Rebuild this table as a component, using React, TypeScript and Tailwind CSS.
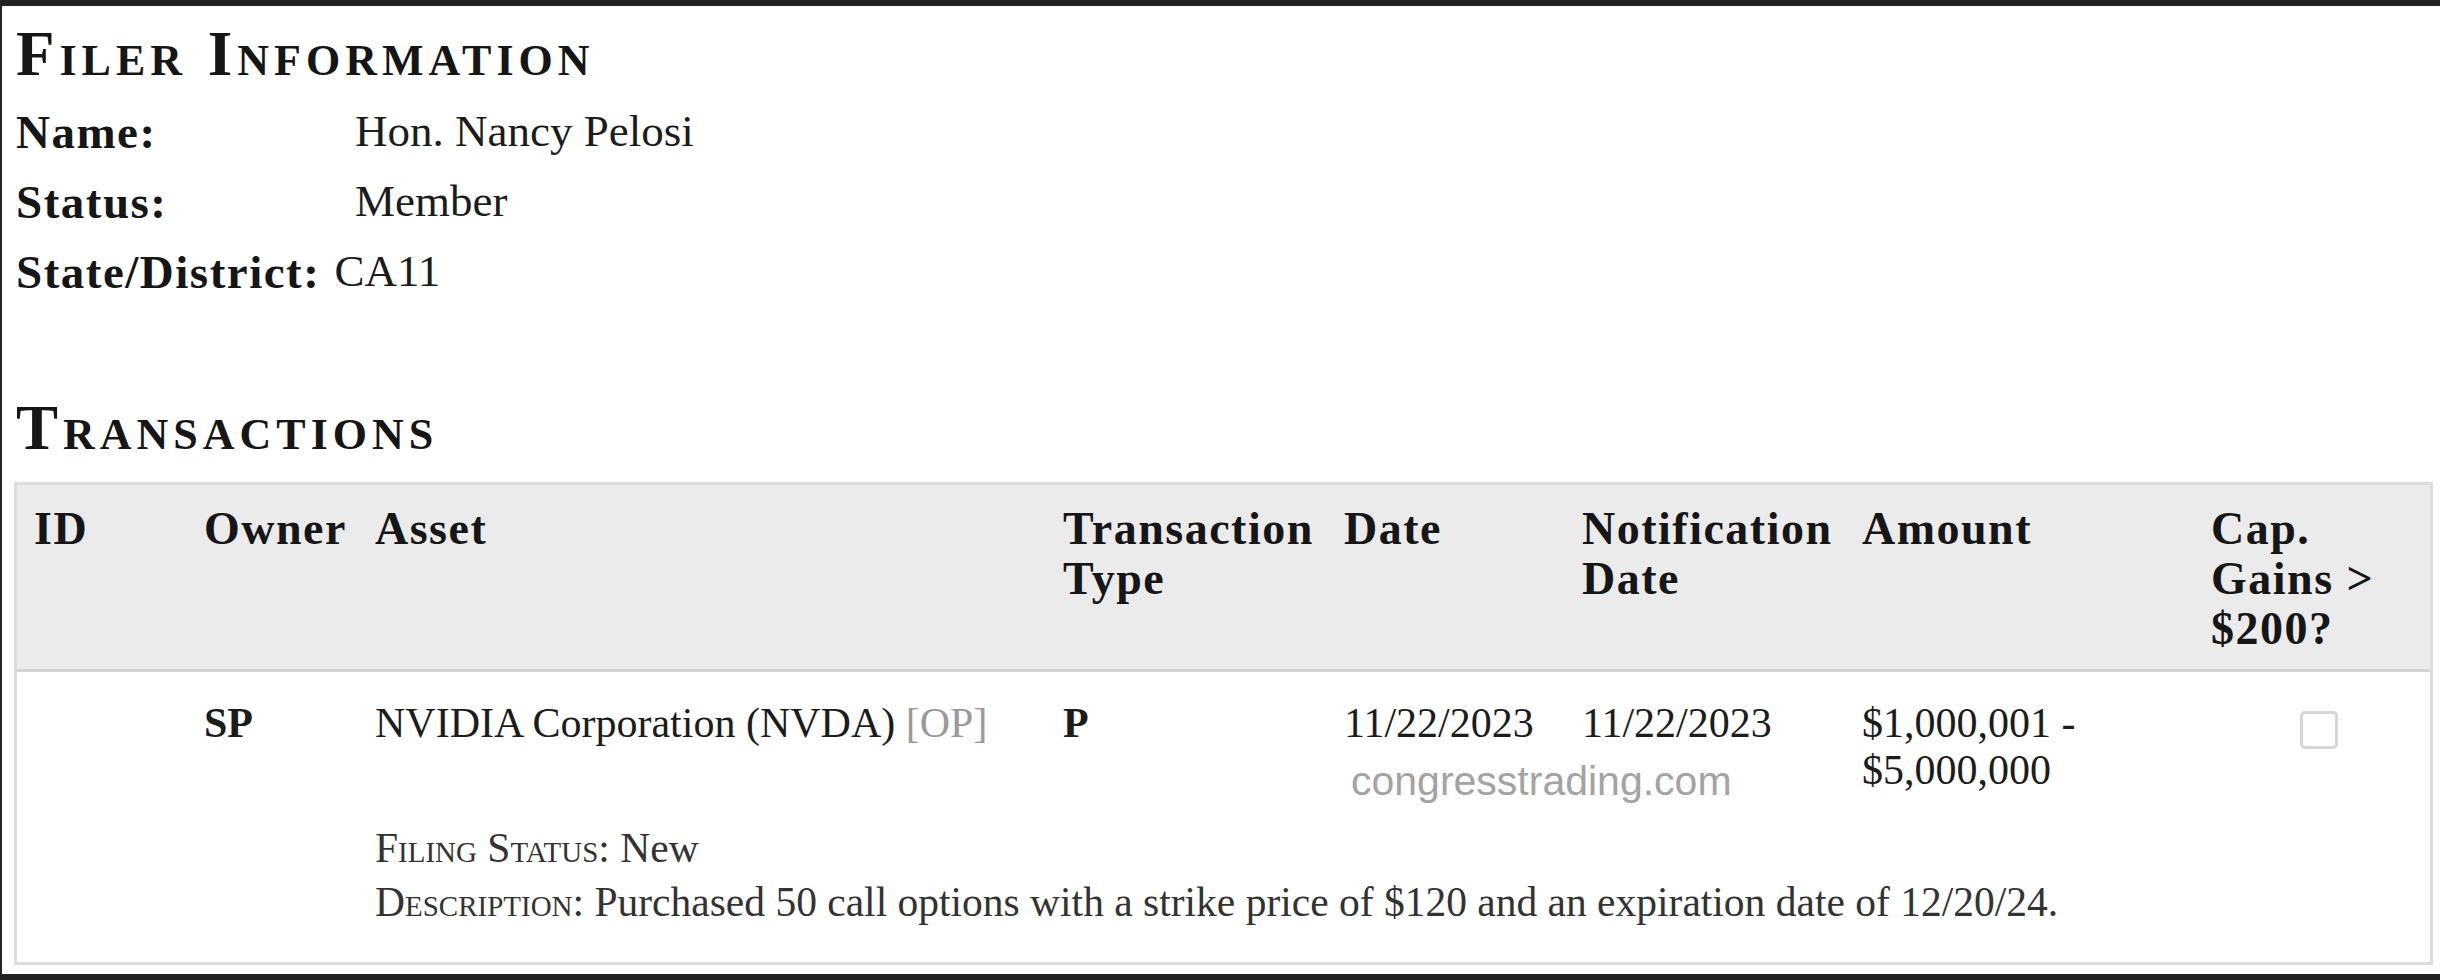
const serif = "font-['Liberation_Serif',Times,serif]";

const cols = "grid grid-cols-[170px_171px_688px_281px_238px_280px_349px_1fr]";

function SectionTitle({ children }: { children: string }) {
  return (
    <h2 className="ml-[2px] text-[63px] leading-[70px] font-bold tracking-[5px] text-[#161616] [font-variant:small-caps]">
      {children}
    </h2>
  );
}

function FilerRow({ label, value, wide }: { label: string; value: string; wide?: boolean }) {
  return (
    <div className="ml-[2px] flex h-[70px] items-center">
      <span
        className={`${wide ? "pr-[14px]" : "w-[339px]"} shrink-0 text-[47px] font-bold tracking-[1.5px] text-[#161616]`}
      >
        {label}
      </span>
      <span className="text-[45px] text-[#1c1c1c]">{value}</span>
    </div>
  );
}

const headers = [
  "ID",
  "Owner",
  "Asset",
  "Transaction Type",
  "Date",
  "Notification Date",
  "Amount",
  "Cap. Gains > $200?",
];

export default function App() {
  return (
    <div className={`h-[980px] w-[2440px] bg-[#222] pt-[6px] pb-[6px] pl-[2px] ${serif}`}>
      <div className="h-full bg-white pt-[13px] pr-[7px] pl-[12px]">
        <SectionTitle>Filer Information</SectionTitle>
        <div className="mt-[8px] flex flex-col">
          <FilerRow label="Name:" value="Hon. Nancy Pelosi" />
          <FilerRow label="Status:" value="Member" />
          <FilerRow label="State/District:" value="CA11" wide />
        </div>
        <div className="mt-[86px]">
          <SectionTitle>Transactions</SectionTitle>
        </div>

        <div className="mt-[19px] border-[3px] border-[#dcdcdc]">
          <div className={`${cols} border-b-[3px] border-[#d4d4d4] bg-[#ebebeb] pt-[19px] pb-[15px]`}>
            {headers.map(h => (
              <div
                key={h}
                className={`pl-[17px] text-[46px] leading-[50px] font-bold tracking-[1.5px] text-[#161616] ${
                  h.startsWith("Cap") ? "pr-[40px]" : "pr-[6px]"
                }`}
              >
                {h}
              </div>
            ))}
          </div>

          <div className="pt-[28px] pb-[33px] text-[42px] leading-[47px] text-[#1c1c1c]">
            <div className={cols}>
              <div />
              <div className="pl-[17px] font-bold">SP</div>
              <div className="pl-[17px]">
                NVIDIA Corporation (NVDA) <span className="text-[#9a9a9a]">[OP]</span>
              </div>
              <div className="pl-[17px] font-bold">P</div>
              <div className="relative pl-[17px]">
                11/22/2023
                <span className="absolute top-[58px] left-[24px] font-['Liberation_Sans',Arial,sans-serif] text-[41px] whitespace-nowrap text-[#a3a3a3]">
                  congresstrading.com
                </span>
              </div>
              <div className="pl-[17px]">11/22/2023</div>
              <div className="pl-[17px]">
                $1,000,001 -
                <br />
                $5,000,000
              </div>
              <div className="pl-[106px]">
                <div className="mt-[11px] h-[38px] w-[38px] rounded-[5px] border-[3px] border-[#d6d6d6] bg-white" />
              </div>
            </div>

            <div className="mt-[27px] pl-[358px] text-[41.5px] leading-[54px] text-[#333]">
              <div>
                <span className="[font-variant:small-caps]">Filing Status:</span> New
              </div>
              <div>
                <span className="[font-variant:small-caps]">Description:</span> Purchased 50 call options
                with a strike price of $120 and an expiration date of 12/20/24.
              </div>
            </div>
          </div>
        </div>
      </div>
    </div>
  );
}
